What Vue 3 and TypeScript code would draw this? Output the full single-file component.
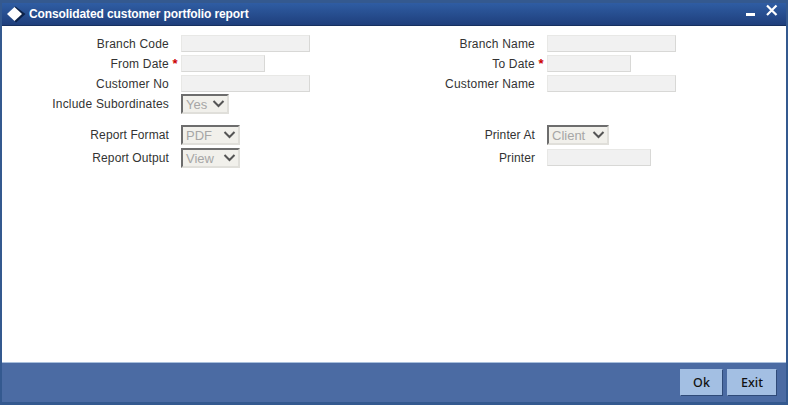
<script setup lang="ts">
interface Field {
  label: string
  kind: 'input' | 'select'
  width: number
  value?: string
  required?: boolean
}

const topLeft: Field[] = [
  { label: 'Branch Code', kind: 'input', width: 129 },
  { label: 'From Date', kind: 'input', width: 84, required: true },
  { label: 'Customer No', kind: 'input', width: 129 },
  { label: 'Include Subordinates', kind: 'select', width: 48, value: 'Yes' },
]
const topRight: Field[] = [
  { label: 'Branch Name', kind: 'input', width: 129 },
  { label: 'To Date', kind: 'input', width: 84, required: true },
  { label: 'Customer Name', kind: 'input', width: 129 },
]
const bottomLeft: Field[] = [
  { label: 'Report Format', kind: 'select', width: 59, value: 'PDF' },
  { label: 'Report Output', kind: 'select', width: 59, value: 'View' },
]
const bottomRight: Field[] = [
  { label: 'Printer At', kind: 'select', width: 62, value: 'Client' },
  { label: 'Printer', kind: 'input', width: 104 },
]
const groups = [
  { id: 'top', cols: [topLeft, topRight] },
  { id: 'bottom', cols: [bottomLeft, bottomRight] },
]
</script>

<template>
  <div class="window">
    <header class="titlebar">
      <svg class="logo" width="20" height="20" viewBox="0 0 20 20">
        <path d="M9.500 2.500L19.500 10l-9.500 8.500-1-1L8.500 3z" fill="#0d2248" />
        <path d="M8.500 3L16 10l-7.500 7L1 10z" fill="#fff" />
      </svg>
      <h1 class="title">Consolidated customer portfolio report</h1>
      <svg class="win-btn" width="12" height="12" viewBox="0 0 12 12">
        <rect x="1" y="5" width="9" height="3" fill="#fff" />
      </svg>
      <svg class="win-btn close" width="13" height="13" viewBox="0 0 13 13">
        <path d="M2 1.500l9.500 9.500M11.500 1.500L2 11" stroke="#fff" stroke-width="2.200" fill="none" />
      </svg>
    </header>

    <main class="body">
      <section v-for="group in groups" :key="group.id" class="group" :class="group.id">
        <div v-for="(col, i) in group.cols" :key="i" class="col">
          <div v-for="field in col" :key="field.label" class="row" :class="`row-${field.kind}`">
            <label class="label">{{ field.label }}</label>
            <span class="req">{{ field.required ? '*' : '' }}</span>
            <input
              v-if="field.kind === 'input'"
              class="input"
              disabled
              :style="{ width: field.width + 'px' }"
            />
            <div v-else class="select" :style="{ width: field.width + 'px' }">
              <span>{{ field.value }}</span>
              <svg class="chevron" width="13" height="8" viewBox="0 0 13 8">
                <path d="M1.500 1l5 5 5-5" stroke="#555" stroke-width="2" fill="none" />
              </svg>
            </div>
          </div>
        </div>
      </section>
    </main>

    <footer class="footer">
      <button class="btn ok">Ok</button>
      <button class="btn exit">Exit</button>
    </footer>
  </div>
</template>

<style>
html,
body {
  margin: 0;
  background: #2f5997;
}
</style>

<style scoped>
.window {
  width: 788px;
  height: 405px;
  box-sizing: border-box;
  display: flex;
  flex-direction: column;
  padding: 3px 2px;
  background: #34598f;
  font-family: 'Liberation Sans', Arial, sans-serif;
  font-size: 12px;
  color: #333;
}

.titlebar {
  height: 23px;
  flex: none;
  display: flex;
  align-items: center;
  padding-left: 4px;
  background: linear-gradient(#2f5da3, #1f3f7c);
  border-bottom: 1px solid #16305f;
  box-sizing: border-box;
}

.logo {
  flex: none;
}

.title {
  margin: 0 0 0 3px;
  flex: 1;
  font-size: 12px;
  font-weight: bold;
  letter-spacing: -0.1px;
  color: #fff;
}

.win-btn {
  flex: none;
  margin-right: 8px;
}

.close {
  margin: 0 8px 7px 0;
}

.body {
  flex: 1;
  background: #fff;
  padding-top: 9px;
}

.group {
  display: flex;
}

.bottom {
  margin-top: 11px;
}

.col {
  width: 366px;
  display: flex;
  flex-direction: column;
  gap: 3px;
}

.row {
  display: flex;
  align-items: center;
  height: 17px;
}

.row-select {
  height: 20px;
}

.top .row-select {
  margin-top: -1px;
}

.bottom .row-input {
  margin-top: 1px;
}

.label {
  width: 167px;
  flex: none;
  text-align: right;
  letter-spacing: 0.2px;
}

.bottom .label {
  letter-spacing: 0.1px;
}

.req {
  width: 12px;
  flex: none;
  color: #c00;
  font-weight: bold;
  font-size: 13px;
  text-align: center;
  box-sizing: border-box;
}

.input {
  height: 17px;
  box-sizing: border-box;
  border: 1px solid #e8e8e6;
  border-right-color: #d8d8d6;
  border-bottom-color: #d8d8d6;
  background: #f1f1f1;
  padding: 0;
  margin: 0;
}

.select {
  height: 20px;
  box-sizing: border-box;
  display: flex;
  align-items: center;
  justify-content: space-between;
  padding: 0 2px 0 3px;
  border: 2px solid #e0dfda;
  border-top-color: #6d6d6d;
  border-left-color: #6d6d6d;
  background: #f1f0eb;
  color: #a6a6a6;
  font-size: 13px;
}

.chevron {
  flex: none;
}

.footer {
  height: 40px;
  flex: none;
  display: flex;
  justify-content: flex-end;
  align-items: flex-start;
  gap: 4px;
  padding: 6px 9px 0 0;
  box-sizing: border-box;
  background: #4b6ba3;
  border-top: 1px solid #a9bfdc;
}

.btn {
  height: 27px;
  padding: 0;
  border: 1px solid #a3bfe3;
  border-right-color: #2f4a78;
  border-bottom-color: #2f4a78;
  background: #a3bfe3;
  color: #111;
  font-family: 'Noto Sans', 'Liberation Sans', sans-serif;
  font-size: 12.5px;
  font-weight: 500;
}

.ok {
  width: 43px;
}

.exit {
  width: 50px;
}
</style>
